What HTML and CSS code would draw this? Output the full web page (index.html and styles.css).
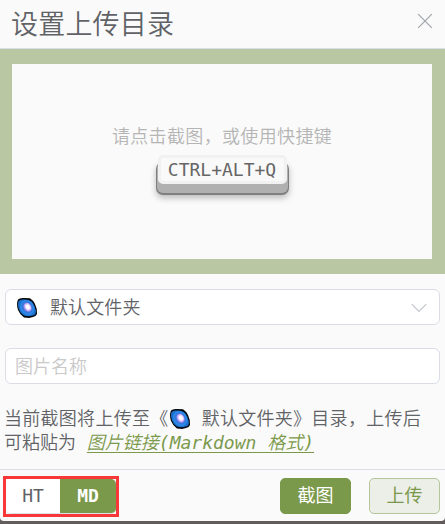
FILE: index.html
```html
<!DOCTYPE html>
<html lang="zh-CN">
<head>
<meta charset="utf-8">
<title>设置上传目录</title>
<link rel="stylesheet" href="styles.css">
</head>
<body>
<svg class="defs" aria-hidden="true">
  <symbol id="galaxy" viewBox="0 0 22 22">
    <path d="M2 2.5Q4 .5 8 1L14 1.2Q17 3 19 7Q21.5 12 21 17Q20 19.5 17 20L13 21 8 20.5Q4 18 2 13Q0 7 2 2.5Z" fill="#05070c"/>
    <path d="M2.3 4.5Q4 2 8 2.6Q13 2.5 16 5Q19 9 20 14Q20 18 17 18.5Q12 20 8 18.5Q4 16 2.8 12Q1.3 8 2.3 4.5Z" fill="#1c6fc9"/>
    <ellipse cx="11.2" cy="10.6" rx="6.8" ry="8" transform="rotate(-35 11.2 10.6)" fill="#2b8ae8"/>
    <ellipse cx="11.2" cy="10.4" rx="5.2" ry="6.5" transform="rotate(-35 11.2 10.4)" fill="#3a78dc"/>
    <ellipse cx="11.6" cy="10.2" rx="3.7" ry="4.8" transform="rotate(-32 11.6 10.2)" fill="#a38ff3"/>
    <ellipse cx="11.8" cy="10" rx="2.9" ry="3.7" transform="rotate(-32 11.8 10)" fill="#dfc7fd"/>
    <ellipse cx="11.8" cy="10" rx="1.9" ry="2.5" transform="rotate(-32 11.8 10)" fill="#fff"/>
  </symbol>
</svg>
<main class="dialog">
  <header class="header">
    <h1 class="title">设置上传目录</h1>
    <svg class="close" viewBox="0 0 16 16"><path d="M1.2 1.2l13.6 13.6M14.8 1.2L1.2 14.8"/></svg>
  </header>
  <section class="capture">
    <div class="dropzone">
      <p class="hint">请点击截图，或使用快捷键</p>
      <kbd class="key">CTRL+ALT+Q</kbd>
    </div>
  </section>
  <section class="form">
    <div class="field select">
      <svg class="galaxy"><use href="#galaxy"/></svg>
      <span class="value">默认文件夹</span>
      <svg class="chevron" viewBox="0 0 16 10"><path d="M.7 1.2L8 8.5l7.3-7.3"/></svg>
    </div>
    <input class="field name" type="text" placeholder="图片名称">
    <p class="tip"><span class="wide">当前截图将上传至《<svg class="galaxy inline"><use href="#galaxy"/></svg> 默认文件夹》目录，上传后</span><br>可粘贴为 <a class="link">图片链接(Markdown 格式)</a></p>
  </section>
  <footer class="footer">
    <div class="highlight">
      <div class="toggle"><span class="option">HT</span><span class="option active">MD</span></div>
    </div>
    <div class="actions">
      <button class="btn primary">截图</button>
      <button class="btn plain">上传</button>
    </div>
  </footer>
</main>
</body>
</html>
```
FILE: styles.css
```css
* { box-sizing: border-box; }
body {
  margin: 0;
  height: 524px;
  overflow: hidden;
  background: #625c5d;
  color: #606266;
  font: 18px/24px "DejaVu Sans Mono", "Noto Sans CJK SC", monospace;
}
.defs { position: absolute; width: 0; height: 0; }
.dialog {
  height: 521px;
  background: #fafafa;
  border-radius: 0 0 4px 4px;
}
.header {
  height: 49px;
  display: flex;
  justify-content: space-between;
  padding: 0 12px 0 11px;
  border-bottom: 1px solid #dcdfe6;
}
.title { margin: 0; padding-top: 1px; font-size: 27px; font-weight: 350; line-height: 47px; letter-spacing: .2px; }
.close { width: 16px; height: 16px; margin: 13px 0 0; fill: none; stroke: #9fa3aa; stroke-width: 1.2; }
.capture { height: 225px; padding: 15px 13px 15px 12px; background: #b9c8a2; }
.dropzone {
  height: 195px;
  display: flex;
  flex-direction: column;
  align-items: center;
  padding-top: 60px;
  background: #fafafa;
}
.hint { margin: 0; color: #b5b5b5; line-height: 26px; font-weight: 350; letter-spacing: .35px; }
.key {
  display: block;
  width: 129px;
  height: 29px;
  margin-top: 5px;
  border: 3px solid #f1f1f1;
  border-radius: 5px;
  background: #f9f9f9;
  box-shadow: 0 8px 0 1px #b0b0b0, 0 9px 0 2px #7f7f7f, 0 12px 6px 2px #bbb;
  color: #666;
  font: 18px/24px "DejaVu Sans Mono", monospace;
  text-align: center;
}
.form { height: 195px; padding: 15px 5px 0; font-weight: 350; }
.field {
  width: 435px;
  height: 36px;
  display: flex;
  align-items: center;
  border: 1px solid #dadde8;
  border-radius: 6px;
  background: #fff;
}
.select { padding: 1px 12px 0 10px; }
.galaxy { width: 22px; height: 22px; }
.inline { vertical-align: -5px; }
.value { flex: 1; margin-left: 12px; letter-spacing: .1px; }
.chevron { width: 16px; height: 10px; fill: none; stroke: #c0c4cc; stroke-width: 1.1; }
.name { margin-top: 23px; padding: 0 9px; font: inherit; outline: 0; }
.name::placeholder { color: #c9c9c9; opacity: 1; }
.tip { margin: 23px 0 0 -1px; white-space: nowrap; }
.wide { letter-spacing: .28px; }
.link { color: #7b994b; font-style: italic; text-decoration: underline; text-underline-offset: 3px; text-decoration-thickness: 1px; }
.footer {
  height: 52px;
  display: flex;
  justify-content: space-between;
  padding: 6px 5px 0 3px;
  border-top: 1px solid #dcdfe6;
}
.highlight { width: 116px; height: 41px; border: 3px solid #f83838; }
.toggle {
  height: 35px;
  display: flex;
  border-bottom: 1px solid #dcdfe6;
  border-radius: 5px;
  overflow: hidden;
}
.option { width: 54px; background: #fff; line-height: 34px; text-align: center; }
.active { width: 56px; background: #7a994b; color: #fff; font-weight: 700; }
.actions { display: flex; gap: 18px; padding-top: 2px; }
.btn { width: 71px; height: 36px; padding: 0; border: 1px solid #7a994b; border-radius: 5px; font: inherit; }
.primary { background: #7a994b; color: #fff; }
.plain { border-color: #b5c69b; background: #eceee8; color: #7a994b; }
```
